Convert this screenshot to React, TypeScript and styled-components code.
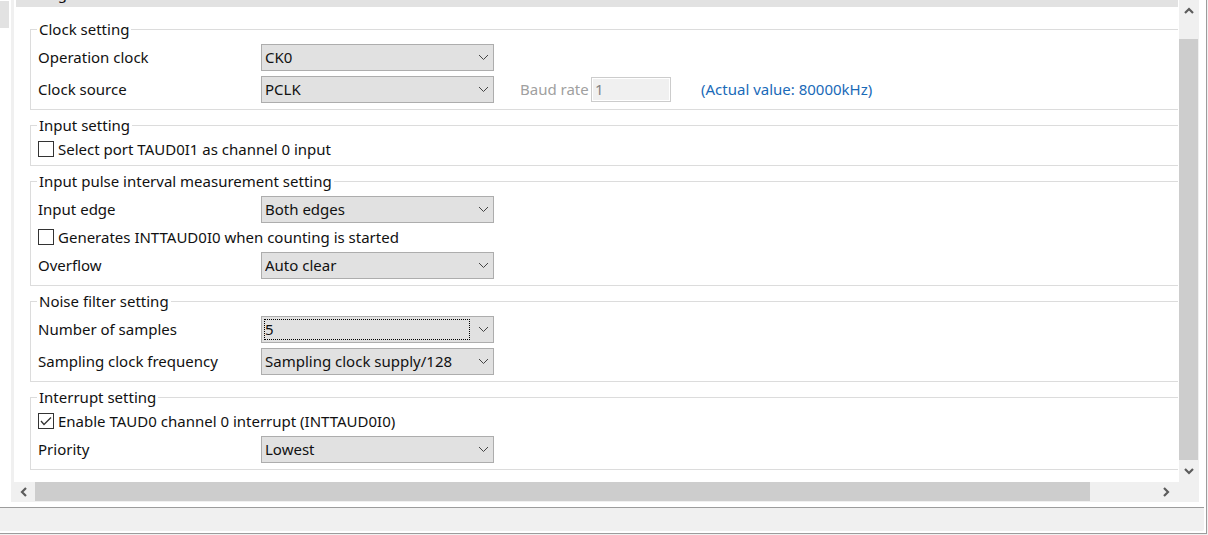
import React, { useId } from "react";
import styled, { createGlobalStyle } from "styled-components";

const GlobalStyle = createGlobalStyle`
  * { box-sizing: border-box; }
  html, body, #root { height: 100%; }
  body {
    margin: 0;
    overflow: hidden;
    background: #fff;
    color: #111;
    font: 15px/21px "Noto Sans", "Segoe UI", sans-serif;
  }
`;

const Window = styled.div`
  display: flex;
  flex-direction: column;
  height: 100%;
  padding-right: 1px;
  background: #f0f0f0;
`;

const Frame = styled.div`
  flex: 1;
  min-height: 0;
  display: flex;
  flex-direction: column;
  background: #fff;
  border-right: 1px solid #9c9c9c;
  border-bottom: 1px solid #9c9c9c;
  padding-bottom: 2px;
  margin-bottom: 1px;
`;

const Main = styled.div`
  flex: 1;
  min-height: 0;
  display: flex;
  padding-right: 7px;
`;

const SideTree = styled.aside`
  width: 11px;
  flex: none;
`;

const SideTab = styled.div`
  width: 9px;
  height: 28px;
  background: #e2e2e2;
  border-top: 1px solid #fff;
`;

const Panel = styled.div`
  flex: 1;
  min-width: 0;
  display: flex;
  flex-direction: column;
  border-left: 3px solid #f0f0f0;
  border-right: 1px solid #f0f0f0;
  border-bottom: 1px solid #f0f0f0;
`;

const Viewport = styled.div`
  flex: 1;
  min-height: 0;
  display: flex;
`;

const Page = styled.main`
  flex: 1;
  min-width: 0;
  display: flex;
  flex-direction: column;
  padding: 0 1px 0 2px;
`;

const TitleBar = styled.header`
  display: flex;
  align-items: flex-end;
  height: 7px;
  overflow: hidden;
  background: #e2e2e2;
  padding: 0 0 3px 1px;
  flex: none;
`;

const Form = styled.form`
  display: flex;
  flex-direction: column;
  gap: 5px;
  padding: 12px 0 0 14px;
`;

const Group = styled.fieldset`
  min-width: 0;
  margin: 0;
  padding: 4px 0 6px 7px;
  border: 1px solid #dcdcdc;
  border-right: 0;
`;

const Legend = styled.legend`
  margin-left: -1px;
  padding: 0 2px;
  height: 21px;
`;

const Rows = styled.div`
  display: flex;
  flex-direction: column;
  gap: 5px;
`;

const Row = styled.div`
  display: flex;
  align-items: center;
  height: 27px;
`;

const FieldLabel = styled.label`
  width: 223px;
  flex: none;
`;

const SelectBox = styled.div<{ $focused?: boolean }>`
  position: relative;
  display: flex;
  width: 233px;
  height: 27px;
  flex: none;

  svg {
    position: absolute;
    right: 5px;
    top: 10px;
    pointer-events: none;
  }

  &::after {
    content: "";
    display: ${(p) => (p.$focused ? "block" : "none")};
    position: absolute;
    inset: 3px 24px 3px 3px;
    border: 1px dotted #000;
    pointer-events: none;
  }
`;

const Select = styled.select`
  appearance: none;
  width: 100%;
  margin: 0;
  padding: 0 24px 0 3px;
  border: 1px solid #adadad;
  border-radius: 0;
  background: #e1e1e1;
  color: inherit;
  font: inherit;
  outline: none;
`;

const CheckLabel = styled.label`
  display: flex;
  align-items: center;
  align-self: flex-start;
  gap: 4px;
  height: 19px;
  padding-bottom: 1px;
`;

const CheckInput = styled.input`
  appearance: none;
  width: 16px;
  height: 16px;
  margin: 0;
  border: 1px solid #333;
  background: #fff;

  &:checked {
    background: #fff
      url("data:image/svg+xml,%3Csvg xmlns='http://www.w3.org/2000/svg' width='14' height='14'%3E%3Cpath d='M2 7l3 3.5 7-7' fill='none' stroke='%23333' stroke-width='1.3'/%3E%3C/svg%3E");
  }
`;

const RateLabel = styled.label`
  margin-left: 26px;
  width: 71px;
  flex: none;
  color: #a0a0a0;
`;

const RateInput = styled.input`
  width: 80px;
  height: 25px;
  padding: 0 3px 2px;
  border: 1px solid #ccc;
  background: #f0f0f0;
  box-shadow: inset 0 0 0 1px #fff;
  color: #838383;
  font: inherit;
`;

const ActualValue = styled.output`
  margin-left: 30px;
  color: #1a6ab8;
`;

const VerticalBar = styled.div`
  display: flex;
  flex-direction: column;
  width: 19px;
  flex: none;
  background: #f0f0f0;
`;

const HorizontalBar = styled.div`
  display: flex;
  height: 19px;
  flex: none;
  padding-right: 21px;
  background: #f0f0f0;
`;

const ArrowButton = styled.button`
  display: flex;
  align-items: center;
  justify-content: center;
  flex: none;
  width: 21px;
  height: 19px;
  padding: 0 2px 0 0;
  border: 0;
  background: none;

  ${VerticalBar} & {
    width: 19px;
    height: 22px;
    padding: 0 0 1px;
  }
`;

const Track = styled.div`
  flex: 1;
  display: flex;
  ${VerticalBar} & {
    flex-direction: column;
    padding-top: 17px;
  }
`;

const Thumb = styled.div<{ $share: number }>`
  flex: 0 0 ${(p) => p.$share}%;
  background: #cdcdcd;
`;

const StatusBar = styled.footer`
  height: 24px;
  margin: 5px 2px 0 0;
  flex: none;
  border-top: 1px solid #9c9c9c;
  border-bottom-right-radius: 2px;
  background: #f0f0f0;
`;

const arrows = {
  up: "M1 7l4-4 4 4",
  down: "M1 3l4 4 4-4",
  left: "M7 1L3 5l4 4",
  right: "M3 1l4 4-4 4",
};

function ScrollArrow({ dir }: { dir: keyof typeof arrows }) {
  return (
    <ArrowButton type="button" aria-label={`Scroll ${dir}`}>
      <svg width="10" height="10" viewBox="0 0 10 10" fill="none" stroke="#5c5c5c" strokeWidth="2.2">
        <path d={arrows[dir]} />
      </svg>
    </ArrowButton>
  );
}

type SelectRowProps = {
  label: string;
  options: string[];
  focused?: boolean;
  children?: React.ReactNode;
};

function SelectRow({ label, options, focused, children }: SelectRowProps) {
  const id = useId();
  return (
    <Row>
      <FieldLabel htmlFor={id}>{label}</FieldLabel>
      <SelectBox $focused={focused}>
        <Select id={id}>
          {options.map((o) => (
            <option key={o}>{o}</option>
          ))}
        </Select>
        <svg width="11" height="7" viewBox="0 0 11 7" fill="none" stroke="#444" strokeWidth="1">
          <path d="M1 1l4.500 4.500L10 1" />
        </svg>
      </SelectBox>
      {children}
    </Row>
  );
}

function CheckRow({ label, checked }: { label: string; checked?: boolean }) {
  return (
    <CheckLabel>
      <CheckInput type="checkbox" defaultChecked={checked} />
      {label}
    </CheckLabel>
  );
}

function Section({ title, children }: { title: string; children: React.ReactNode }) {
  return (
    <Group>
      <Legend>{title}</Legend>
      <Rows>{children}</Rows>
    </Group>
  );
}

export default function App() {
  return (
    <>
      <GlobalStyle />
      <Window>
        <Frame>
          <Main>
            <SideTree>
              <SideTab />
            </SideTree>
            <Panel>
              <Viewport>
                <Page>
                  <TitleBar>Setting</TitleBar>
                  <Form>
                    <Section title="Clock setting">
                      <SelectRow label="Operation clock" options={["CK0"]} />
                      <SelectRow label="Clock source" options={["PCLK"]}>
                        <RateLabel htmlFor="baud">Baud rate</RateLabel>
                        <RateInput id="baud" defaultValue="1" disabled />
                        <ActualValue>(Actual value: 80000kHz)</ActualValue>
                      </SelectRow>
                    </Section>
                    <Section title="Input setting">
                      <CheckRow label="Select port TAUD0I1 as channel 0 input" />
                    </Section>
                    <Section title="Input pulse interval measurement setting">
                      <SelectRow label="Input edge" options={["Both edges"]} />
                      <CheckRow label="Generates INTTAUD0I0 when counting is started" />
                      <SelectRow label="Overflow" options={["Auto clear"]} />
                    </Section>
                    <Section title="Noise filter setting">
                      <SelectRow label="Number of samples" options={["5"]} focused />
                      <SelectRow
                        label="Sampling clock frequency"
                        options={["Sampling clock supply/128"]}
                      />
                    </Section>
                    <Section title="Interrupt setting">
                      <CheckRow label="Enable TAUD0 channel 0 interrupt (INTTAUD0I0)" checked />
                      <SelectRow label="Priority" options={["Lowest"]} />
                    </Section>
                  </Form>
                </Page>
                <VerticalBar>
                  <ScrollArrow dir="up" />
                  <Track>
                    <Thumb $share={100} />
                  </Track>
                  <ScrollArrow dir="down" />
                </VerticalBar>
              </Viewport>
              <HorizontalBar>
                <ScrollArrow dir="left" />
                <Track>
                  <Thumb $share={94.1} />
                </Track>
                <ScrollArrow dir="right" />
              </HorizontalBar>
            </Panel>
          </Main>
          <StatusBar />
        </Frame>
      </Window>
    </>
  );
}
